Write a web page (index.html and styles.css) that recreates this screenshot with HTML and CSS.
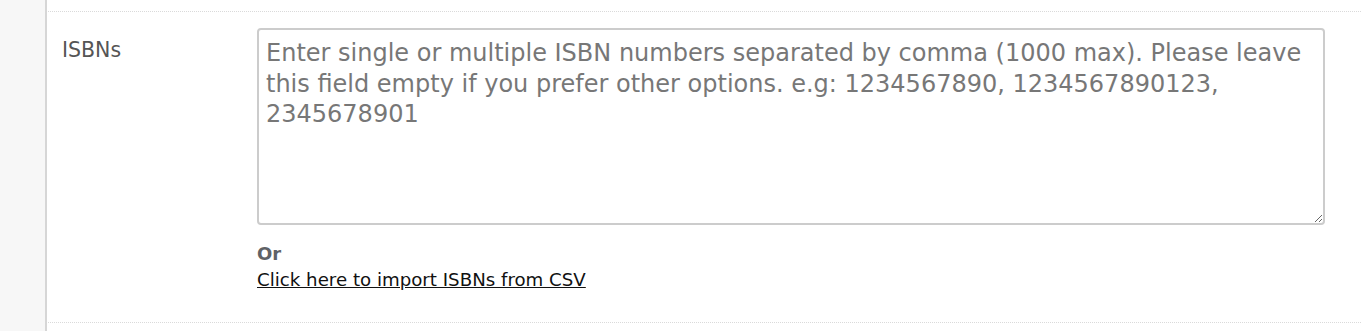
FILE: index.html
```html
<!DOCTYPE html>
<html lang="en">
<head>
  <meta charset="UTF-8">
  <title>ISBN import</title>
  <link rel="stylesheet" href="styles.css">
</head>
<body>
  <div class="page">
    <aside class="side"></aside>
    <main class="content">
      <div class="top-gap"></div>
      <div class="form-row">
        <label class="row-label" for="isbns">ISBNs</label>
        <div class="row-field">
          <textarea id="isbns" class="isbn-box" placeholder="Enter single or multiple ISBN numbers separated by comma (1000 max). Please leave this field empty if you prefer other options. e.g: 1234567890, 1234567890123, 2345678901"></textarea>
          <div class="or-text">Or</div>
          <a href="#" class="csv-link">Click here to import ISBNs from CSV</a>
        </div>
      </div>
      <div class="bottom-gap"></div>
    </main>
  </div>
</body>
</html>
```

FILE: styles.css
```css
body {
  margin: 0;
  font-family: "DejaVu Sans", Verdana, sans-serif;
  background: #f7f7f7;
  color: #555;
}

.page {
  display: flex;
  height: 331px;
}

.side {
  width: 45px;
  background: #f7f7f7;
}

.content {
  flex: 1;
  background: #fff;
  border-left: 2px solid #d6d6d6;
  padding-left: 1px;
}

.top-gap {
  height: 11px;
}

.form-row {
  display: flex;
  border-top: 1px dotted #dadada;
  border-bottom: 1px dotted #dadada;
  padding: 16px 0 32px 14px;
}

.row-label {
  width: 195px;
  font-size: 20.5px;
  color: #555;
  padding-top: 10px;
}

.row-field {
  width: 1068px;
}

.isbn-box {
  display: block;
  width: 100%;
  height: 197px;
  box-sizing: border-box;
  border: 2px solid #ccc;
  border-radius: 4px;
  padding: 8px 2px 8px 7px;
  font-family: "DejaVu Sans", Verdana, sans-serif;
  font-size: 24px;
  line-height: 30.5px;
  color: #333;
  resize: vertical;
}

.isbn-box::placeholder {
  color: #777;
}

.or-text {
  margin-top: 18px;
  font-size: 18px;
  font-weight: bold;
  color: #5f6266;
}

.csv-link {
  display: inline-block;
  margin-top: 5px;
  font-size: 18.2px;
  color: #111;
  text-decoration: underline;
}
```
